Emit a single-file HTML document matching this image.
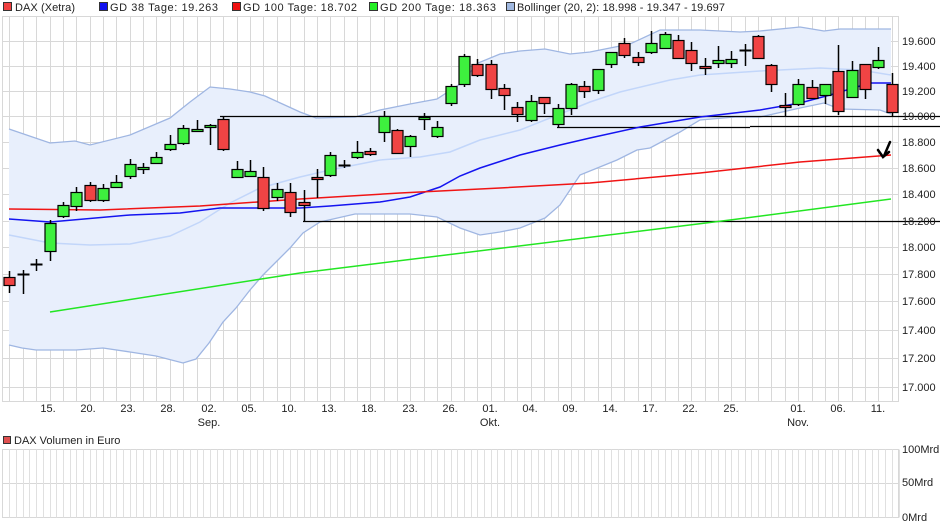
<!DOCTYPE html>
<html><head><meta charset="utf-8"><style>
html,body{margin:0;padding:0;background:#fff;width:940px;height:526px;overflow:hidden}
svg{display:block}
text{font-family:"Liberation Sans",sans-serif;fill:#222}
.x{font-family:"Liberation Sans Narrow","Liberation Sans",sans-serif;font-size:11px}
</style></head><body>
<svg id="s" width="940" height="526" viewBox="0 0 940 526">
<g id="grid"></g>
<g id="bands"></g>
<g id="lines"></g>
<g id="candles"></g>
<!-- legend -->
<rect x="3.5" y="2.5" width="8" height="8" fill="#f04040" stroke="#333"/>
<text x="15" y="11" font-size="11" textLength="60">DAX (Xetra)</text>
<rect x="99.5" y="2.5" width="8" height="8" fill="#1010ee" stroke="#333"/>
<text x="110" y="11" font-size="11" textLength="108">GD 38 Tage: 19.263</text>
<rect x="232.5" y="2.5" width="8" height="8" fill="#ee1010" stroke="#333"/>
<text x="243" y="11" font-size="11" textLength="114">GD 100 Tage: 18.702</text>
<rect x="369.5" y="2.5" width="8" height="8" fill="#22ee22" stroke="#333"/>
<text x="380" y="11" font-size="11" textLength="116">GD 200 Tage: 18.363</text>
<rect x="506.5" y="2.5" width="8" height="8" fill="#a0b8e0" stroke="#333"/>
<text x="517" y="11" font-size="11" textLength="208">Bollinger (20, 2): 18.998 - 19.347 - 19.697</text>
<!-- y labels -->
<g font-size="11">
<text x="902" y="45">19.600</text><text x="902" y="70">19.400</text><text x="902" y="95">19.200</text>
<text x="902" y="120">19.000</text><text x="902" y="146">18.800</text><text x="902" y="172">18.600</text>
<text x="902" y="198">18.400</text><text x="902" y="225">18.200</text><text x="902" y="251">18.000</text>
<text x="902" y="278">17.800</text><text x="902" y="305">17.600</text><text x="902" y="334">17.400</text>
<text x="902" y="362">17.200</text><text x="902" y="391">17.000</text>
</g>
<g class="x" text-anchor="middle">
<text x="48" y="412">15.</text><text x="88" y="412">20.</text><text x="128" y="412">23.</text><text x="168" y="412">28.</text>
<text x="209" y="412">02.</text><text x="249" y="412">05.</text><text x="289" y="412">10.</text><text x="329" y="412">13.</text>
<text x="369" y="412">18.</text><text x="410" y="412">23.</text><text x="450" y="412">26.</text><text x="490" y="412">01.</text>
<text x="530" y="412">04.</text><text x="570" y="412">09.</text><text x="610" y="412">14.</text><text x="650" y="412">17.</text>
<text x="690" y="412">22.</text><text x="731" y="412">25.</text><text x="798" y="412">01.</text><text x="838" y="412">06.</text>
<text x="878" y="412">11.</text>
<text x="209" y="426">Sep.</text><text x="490" y="426">Okt.</text><text x="798" y="426">Nov.</text>
</g>
<rect x="3.5" y="436.5" width="7" height="7" fill="#e05050" stroke="#333"/>
<text class="x" x="14" y="444">DAX Volumen in Euro</text>
<g class="x"><text x="902" y="453">100Mrd</text><text x="902" y="486">50Mrd</text><text x="902" y="521">0Mrd</text></g>
<!-- arrow -->
<path d="M890 142 L884 156 M878 150 L883 157 L889 152" stroke="#000" stroke-width="2.5" fill="none" stroke-linecap="round"/>
</svg>
<script>
var NS="http://www.w3.org/2000/svg";
function el(p,t,a){var e=document.createElementNS(NS,t);for(var k in a)e.setAttribute(k,a[k]);document.getElementById(p).appendChild(e);return e;}
var L=2.5,R=898.5,T=16.5,B=401.5;
el("grid","rect",{x:L,y:T,width:R-L,height:B-T,fill:"#fff",stroke:"#d8d8d8"});
var hy=[41,66,91,116,142,168,194,221,247,274,301,330,358,387];
hy.forEach(function(y){el("grid","line",{x1:L,x2:R,y1:y+.5,y2:y+.5,stroke:"#d8d8d8"})});
function cx(i){return 9.4+13.37*i;}
for(var i=0;i<67;i++){var x=Math.round(cx(i))+.5;el("grid","line",{x1:x,x2:x,y1:T,y2:B,stroke:"#d8d8d8"});}
// volume panel
el("grid","rect",{x:L,y:449.5,width:R-L,height:68,fill:"#fff",stroke:"#d8d8d8"});
el("grid","line",{x1:L,x2:R,y1:483.5,y2:483.5,stroke:"#d8d8d8"});
for(var i=0;i<134;i++){var x=Math.round(9.4+6.685*i)+.5;el("grid","line",{x1:x,x2:x,y1:449.5,y2:517.5,stroke:"#e0e0e0"});}
function pts(a){return a.map(function(p){return p[0]+","+p[1]}).join(" ");}
var up=[[9,129],[50,143],[75,141],[90,145],[130,135],[170,118],[190,102],[210,87],[230,89],[250,92],[265,96],[300,112],[316,118],[355,117],[380,110],[410,104],[437,99],[460,84],[478,63],[500,54],[520,51],[545,49],[570,54],[590,52],[630,44],[660,30],[700,30],[740,32],[760,31],[800,27],[824,31],[840,29],[891,29]];
var lo=[[9,345],[22,348],[36,350],[76,350],[103,348],[130,352],[156,356],[183,363],[196,359],[209,343],[223,322],[236,308],[250,290],[263,275],[276,262],[290,248],[303,233],[320,222],[355,214],[410,214],[437,217],[460,228],[480,235],[500,232],[520,228],[545,218],[560,205],[580,175],[617,160],[637,150],[650,148],[680,132],[700,120],[735,117],[760,117],[800,108],[824,103],[840,109],[880,110],[891,114]];
el("bands","polygon",{points:pts(up.concat(lo.slice().reverse())),fill:"#e8effc"});
el("bands","polyline",{points:pts(up),fill:"none",stroke:"#9fb6e2","stroke-width":1.3});
el("bands","polyline",{points:pts(lo),fill:"none",stroke:"#9fb6e2","stroke-width":1.3});
var mid=[[9,235],[50,243],[90,245],[130,244],[170,236],[200,222],[230,203],[260,188],[300,177],[330,170],[380,160],[420,157],[450,152],[480,140],[520,130],[560,114],[590,102],[620,92],[670,80],[700,75],[760,71],[820,68],[860,70],[891,75]];
el("bands","polyline",{points:pts(mid),fill:"none",stroke:"#c2d6fa","stroke-width":1.5});
// horizontal black lines
el("lines","line",{x1:220,x2:940,y1:116.5,y2:116.5,stroke:"#000","stroke-width":1.3});
el("lines","line",{x1:557,x2:750,y1:127.5,y2:127.5,stroke:"#000","stroke-width":1.3});
el("lines","line",{x1:750,x2:940,y1:126.5,y2:126.5,stroke:"#000","stroke-width":1.3});
el("lines","line",{x1:303,x2:940,y1:221.5,y2:221.5,stroke:"#000","stroke-width":1.3});
var g38=[[9,219],[50,222],[130,215],[180,213],[220,208],[300,208],[330,206],[380,202],[410,197],[440,187],[460,176],[480,168],[520,155],[560,145],[590,138],[640,127],[700,117],[760,110],[800,103],[830,95],[870,83],[891,83]];
el("lines","polyline",{points:pts(g38),fill:"none",stroke:"#1414f0","stroke-width":1.5});
var g100=[[9,209],[100,210],[200,206],[300,199],[400,193],[500,188],[590,183],[700,173],[800,162],[891,155]];
el("lines","polyline",{points:pts(g100),fill:"none",stroke:"#f01414","stroke-width":1.5});
var g200=[[50,312],[300,273],[730,220],[891,199]];
el("lines","polyline",{points:pts(g200),fill:"none",stroke:"#22e622","stroke-width":1.5});
// candles: top,bottom,wickTop,wickBottom,color(g/r/k)
var C=[[277,285,271,293,'r'],[274,275,270,294,'k'],[264,264,259,271,'k'],[223,251,220,261,'g'],[205,216,202,218,'g'],[192,206,187,211,'g'],[185,200,182,202,'r'],[188,200,184,202,'g'],[182,187,175,187,'g'],[164,176,159,179,'g'],[167,169,163,174,'g'],[157,163,152,163,'g'],[144,149,135,151,'g'],[128,143,125,145,'g'],[129,131,120,131,'g'],[125,127,124,145,'g'],[119,149,117,151,'r'],[169,177,161,177,'g'],[171,176,160,176,'g'],[177,208,167,211,'r'],[189,197,183,201,'g'],[192,212,183,217,'r'],[202,205,190,221,'r'],[177,179,169,198,'r'],[155,175,152,177,'g'],[165,165,160,168,'k'],[152,157,141,159,'g'],[151,154,148,156,'r'],[116,132,111,142,'g'],[130,153,129,154,'r'],[136,146,135,157,'g'],[117,119,113,130,'g'],[127,136,121,138,'g'],[86,103,84,106,'g'],[56,84,54,87,'g'],[64,75,59,77,'r'],[64,89,60,99,'r'],[88,95,84,110,'r'],[107,114,102,122,'r'],[101,120,95,122,'g'],[97,103,97,114,'r'],[108,124,104,128,'g'],[84,108,83,115,'g'],[86,91,81,98,'r'],[69,90,69,94,'g'],[52,64,52,68,'g'],[43,55,38,58,'r'],[57,62,52,66,'r'],[43,52,31,54,'g'],[34,48,32,48,'g'],[40,58,35,59,'r'],[50,63,42,71,'r'],[66,68,58,75,'r'],[60,63,46,68,'g'],[59,63,51,68,'g'],[50,50,44,66,'k'],[36,58,35,58,'r'],[65,84,64,92,'r'],[105,107,93,117,'r'],[84,104,79,106,'g'],[87,98,80,99,'r'],[84,95,84,104,'g'],[71,111,45,115,'r'],[70,97,61,98,'g'],[64,89,64,99,'r'],[60,67,47,69,'g'],[84,112,73,116,'r']];
C.forEach(function(c,i){var x=Math.round(cx(i))+.5;
el("candles","line",{x1:x,x2:x,y1:c[2],y2:c[3],stroke:"#000","stroke-width":1.5});
if(c[4]=='k'){el("candles","line",{x1:x-6,x2:x+6,y1:c[0]+.5,y2:c[0]+.5,stroke:"#000","stroke-width":2});}
else{var h=Math.max(c[1]-c[0],2);el("candles","rect",{x:x-5.5,y:c[0]+.5,width:11,height:h,fill:c[4]=='g'?'#3ef03e':'#f04444',stroke:"#000","stroke-width":1.2});}
});
</script>
</body></html>
